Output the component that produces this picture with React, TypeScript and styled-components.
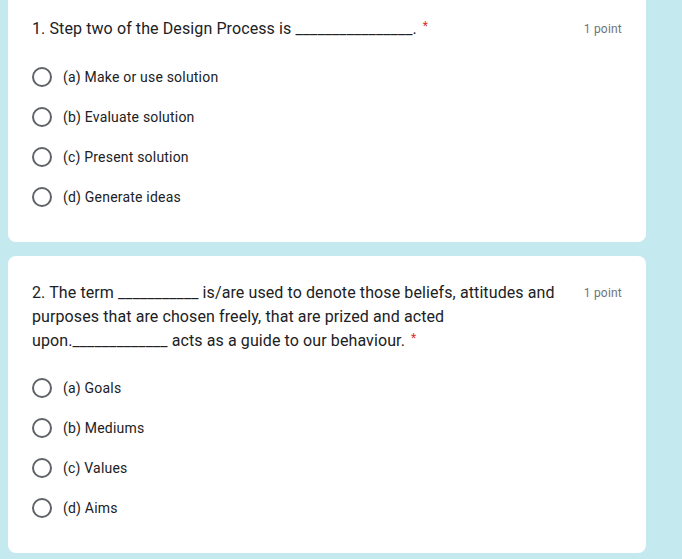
import React from "react";
import styled, { createGlobalStyle } from "styled-components";

const Global = createGlobalStyle`
  html, body { margin: 0; padding: 0; }
  body {
    background: #c4e9ef;
    font-family: Roboto, "Liberation Sans", Arial, sans-serif;
    color: #202124;
  }
`;

const Page = styled.div`
  display: flex;
  flex-direction: column;
  gap: 14px;
  width: 638px;
  margin: -8px 0 0 8px;
`;

const Card = styled.section`
  background: #fff;
  border-radius: 8px;
  padding: 24px 24px 25px 24px;
`;

const Header = styled.div`
  display: flex;
  align-items: flex-start;
`;

const Title = styled.div`
  flex: 1;
  font-family: Roboto, "Liberation Sans", Arial, sans-serif;
  font-size: 16px;
  line-height: 24px;
  letter-spacing: 0.1px;
  color: #202124;
  padding-top: 1px;
  margin-bottom: -1px;
`;

const Required = styled.span`
  color: #d93025;
  font-size: 12px;
  line-height: 1;
  margin-left: 6px;
  vertical-align: 4px;
`;

const Points = styled.div`
  margin-left: 24px;
  font-size: 12px;
  line-height: 24px;
  color: #70757a;
  letter-spacing: 0.2px;
  white-space: nowrap;
  padding-top: 1px;
`;

const Options = styled.div<{ $gap: number }>`
  display: flex;
  flex-direction: column;
  margin-top: ${(p) => p.$gap}px;
`;

const Option = styled.label`
  display: flex;
  align-items: center;
  height: 40px;
  font-size: 14px;
  letter-spacing: 0.2px;
  color: #202124;
`;

const Radio = styled.span`
  box-sizing: border-box;
  width: 20px;
  height: 20px;
  border-radius: 50%;
  border: 2px solid #5f6368;
  margin-right: 11px;
  flex-shrink: 0;
`;

type Q = {
  title: React.ReactNode;
  options: string[];
  gap: number;
};

const questions: Q[] = [
  {
    title: <>1. Step two of the Design Process is ________________.</>,
    options: [
      "(a) Make or use solution",
      "(b) Evaluate solution",
      "(c) Present solution",
      "(d) Generate ideas",
    ],
    gap: 16,
  },
  {
    title: (
      <>
        2. The term ___________ is/are used to denote those beliefs, attitudes and
        purposes that are chosen freely, that are prized and acted
        upon._____________ acts as a guide to our behaviour.
      </>
    ),
    options: ["(a) Goals", "(b) Mediums", "(c) Values", "(d) Aims"],
    gap: 16,
  },
];

export default function App() {
  return (
    <>
      <Global />
      <Page>
        {questions.map((q, i) => (
          <Card key={i}>
            <Header>
              <Title>
                {q.title}
                <Required>*</Required>
              </Title>
              <Points>1 point</Points>
            </Header>
            <Options $gap={q.gap}>
              {q.options.map((o) => (
                <Option key={o}>
                  <Radio />
                  {o}
                </Option>
              ))}
            </Options>
          </Card>
        ))}
      </Page>
    </>
  );
}
